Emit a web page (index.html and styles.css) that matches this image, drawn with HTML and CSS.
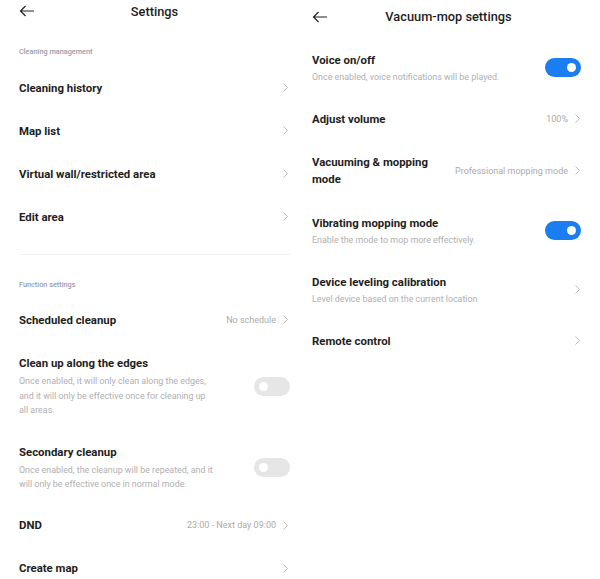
FILE: index.html
```html
<!DOCTYPE html>
<html lang="en">
<head>
    <meta charset="UTF-8">
    <meta name="viewport" content="width=device-width, initial-scale=1.0">
    <title>Settings</title>
    <link rel="stylesheet" href="styles.css">
</head>
<body>
    <!-- Left screen: general settings -->
    <div class="screen screen-left">
        <div class="header">
            <svg class="back" width="16" height="12" viewBox="0 0 16 12"><path d="M15 6H1.5M6.5 1L1.5 6l5 5" fill="none" stroke="#222" stroke-width="1.2"/></svg>
            <div class="title">Settings</div>
        </div>

        <div class="section-label">Cleaning management</div>
        <div class="row"><span class="name">Cleaning history</span><span class="chev"></span></div>
        <div class="row"><span class="name">Map list</span><span class="chev"></span></div>
        <div class="row"><span class="name">Virtual wall/restricted area</span><span class="chev"></span></div>
        <div class="row"><span class="name">Edit area</span><span class="chev"></span></div>

        <div class="divider"></div>

        <div class="section-label">Function settings</div>
        <div class="row"><span class="name">Scheduled cleanup</span><span class="value">No schedule</span><span class="chev"></span></div>
        <div class="item">
            <div class="text">
                <div class="name">Clean up along the edges</div>
                <div class="desc">Once enabled, it will only clean along the edges, and it will only be effective once for cleaning up all areas.</div>
            </div>
            <span class="toggle"></span>
        </div>
        <div class="item">
            <div class="text">
                <div class="name">Secondary cleanup</div>
                <div class="desc">Once enabled, the cleanup will be repeated, and it will only be effective once in normal mode.</div>
            </div>
            <span class="toggle"></span>
        </div>
        <div class="row"><span class="name">DND</span><span class="value">23:00 - Next day 09:00</span><span class="chev"></span></div>
        <div class="row"><span class="name">Create map</span><span class="chev"></span></div>
    </div>

    <!-- Right screen: vacuum-mop settings -->
    <div class="screen screen-right">
        <div class="header">
            <svg class="back" width="16" height="12" viewBox="0 0 16 12"><path d="M15 6H1.5M6.5 1L1.5 6l5 5" fill="none" stroke="#222" stroke-width="1.2"/></svg>
            <div class="title">Vacuum-mop settings</div>
        </div>

        <div class="item">
            <div class="text">
                <div class="name">Voice on/off</div>
                <div class="desc">Once enabled, voice notifications will be played.</div>
            </div>
            <span class="toggle on"></span>
        </div>
        <div class="row"><span class="name">Adjust volume</span><span class="value">100%</span><span class="chev"></span></div>
        <div class="item">
            <div class="text narrow">
                <div class="name two-line">Vacuuming &amp; mopping mode</div>
            </div>
            <span class="value">Professional mopping mode</span><span class="chev"></span>
        </div>
        <div class="item">
            <div class="text">
                <div class="name">Vibrating mopping mode</div>
                <div class="desc">Enable the mode to mop more effectively.</div>
            </div>
            <span class="toggle on"></span>
        </div>
        <div class="item">
            <div class="text">
                <div class="name">Device leveling calibration</div>
                <div class="desc">Level device based on the current location</div>
            </div>
            <span class="chev"></span>
        </div>
        <div class="row"><span class="name">Remote control</span><span class="chev"></span></div>
    </div>
</body>
</html>
```

FILE: styles.css
```css
/* Global */
body {
    margin: 0;
    background: #fff;
    font-family: 'Roboto', 'Noto Sans', sans-serif;
    color: #1e1e1e;
    display: flex;
    width: 600px;
    height: 579px;
    overflow: hidden;
}

.screen {
    box-sizing: border-box;
}

.screen-left {
    width: 296px;
    padding: 0 6px 0 19px;
}

.screen-right {
    width: 304px;
    padding: 0 19px 0 16px;
}

/* Header with back arrow and centred title */
.header {
    position: relative;
    display: flex;
    justify-content: center;
    align-items: center;
}

.screen-left .header {
    height: 23px;
}

.screen-right .header {
    height: 38px;
    align-items: flex-start;
    padding-top: 8px;
    box-sizing: border-box;
}

.back {
    position: absolute;
    left: 0;
    top: 5px;
}

.screen-right .back {
    top: 11px;
}

.title {
    font-size: 12.8px;
    font-weight: 500;
    line-height: 18px;
}

.screen-right .title {
    margin-left: 4px;
}

/* Section labels */
.section-label {
    font-size: 7.3px;
    font-weight: 500;
    color: #999cab;
    line-height: 12px;
    padding: 23px 0 8px;
}

.divider + .section-label {
    padding-top: 24px;
    padding-bottom: 7px;
}

.divider {
    height: 1px;
    background: #efefef;
    margin: 16px 0 0;
}

/* Rows */
.row {
    display: flex;
    align-items: center;
    height: 43px;
}

.name {
    font-size: 11.4px;
    font-weight: 700;
    line-height: 16px;
    flex: 1;
}

.value {
    font-size: 9px;
    color: #ababab;
    margin-right: 7px;
}

.chev {
    width: 5px;
    height: 9px;
    margin-right: 2px;
    background: no-repeat center / 5px 9px url("data:image/svg+xml,%3Csvg xmlns='http://www.w3.org/2000/svg' viewBox='0 0 5 9'%3E%3Cpath d='M0.5 0.5L4.5 4.5L0.5 8.5' fill='none' stroke='%23b5b5b5' stroke-width='0.9'/%3E%3C/svg%3E");
}

.screen-right .chev {
    margin-right: 1px;
}

/* Items with description */
.item {
    display: flex;
    align-items: center;
    padding: 14px 0 12px;
}

.screen-right .item {
    padding: 13.5px 0;
}

.text {
    flex: 1;
}

.text.narrow {
    flex: 0 0 130px;
    margin-right: auto;
}

.screen-right .item .value {
    flex: none;
}

.two-line {
    line-height: 17px;
}

.desc {
    font-size: 8.9px;
    color: #b0b0b0;
    line-height: 14.5px;
    margin-top: 3px;
    max-width: 196px;
}

.screen-right .desc {
    max-width: none;
    margin-top: 2px;
    line-height: 14px;
}

/* Toggles */
.toggle {
    position: relative;
    width: 36px;
    height: 19px;
    border-radius: 10px;
    background: #e6e6e6;
    flex: none;
}

.toggle::after {
    content: "";
    position: absolute;
    left: 5px;
    top: 5px;
    width: 9px;
    height: 9px;
    border-radius: 50%;
    background: #fff;
}

.toggle.on {
    background: #1a7ef2;
}

.toggle.on::after {
    left: auto;
    right: 5px;
}
```
